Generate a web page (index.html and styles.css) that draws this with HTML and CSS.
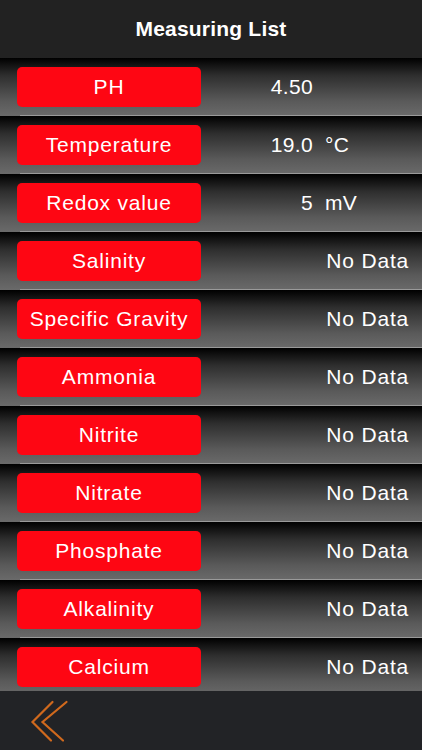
FILE: index.html
```html
<!DOCTYPE html>
<html lang="en">
  <head>
    <meta charset="UTF-8" />
    <meta name="viewport" content="width=device-width, initial-scale=1.0" />
    <title>Measuring List</title>
    <link rel="stylesheet" href="styles.css">
  </head>
  <body>
    <header class="nav-bar">
      <h1>Measuring List</h1>
    </header>

    <div class="list">
      <div class="row">
        <span class="name">PH</span>
        <span class="value">4.50</span>
      </div>
      <div class="row">
        <span class="name">Temperature</span>
        <span class="value">19.0</span>
        <span class="unit">&deg;C</span>
      </div>
      <div class="row">
        <span class="name">Redox value</span>
        <span class="value">5</span>
        <span class="unit">mV</span>
      </div>
      <div class="row">
        <span class="name">Salinity</span>
        <span class="no-data">No Data</span>
      </div>
      <div class="row">
        <span class="name">Specific Gravity</span>
        <span class="no-data">No Data</span>
      </div>
      <div class="row">
        <span class="name">Ammonia</span>
        <span class="no-data">No Data</span>
      </div>
      <div class="row">
        <span class="name">Nitrite</span>
        <span class="no-data">No Data</span>
      </div>
      <div class="row">
        <span class="name">Nitrate</span>
        <span class="no-data">No Data</span>
      </div>
      <div class="row">
        <span class="name">Phosphate</span>
        <span class="no-data">No Data</span>
      </div>
      <div class="row">
        <span class="name">Alkalinity</span>
        <span class="no-data">No Data</span>
      </div>
      <div class="row">
        <span class="name">Calcium</span>
        <span class="no-data">No Data</span>
      </div>
    </div>

    <footer class="tool-bar">
      <!-- back button -->
      <svg class="back" width="40" height="44" viewBox="0 0 40 44">
        <polyline points="22.5,3 2.5,23 21,41.5" />
        <polyline points="36.5,3 12.5,23 33,41.5" />
      </svg>
    </footer>
  </body>
</html>
```

FILE: styles.css
```css
body {
  font-family: "Liberation Sans", Arial, sans-serif;
  background-color: #222326;
  margin: 0;
  padding: 0;
  height: 750px;
  display: flex;
  flex-direction: column;
  overflow: hidden;
  color: #fff;
}
.nav-bar {
  height: 58px;
  flex: none;
  background-color: #222222;
  display: flex;
  align-items: center;
  justify-content: center;
}
.nav-bar h1 {
  margin: 0;
  font-size: 21px;
  font-weight: bold;
  letter-spacing: 0.2px;
  color: #fff;
}
.list {
  flex: 1;
  overflow: hidden;
}
.row {
  height: 58px;
  box-sizing: border-box;
  padding: 9px 13px 9px 17px;
  display: flex;
  align-items: center;
  font-size: 21px;
  letter-spacing: 0.35px;
  /* separator line is inset like an iOS table cell */
  background:
    linear-gradient(#9a9a9a, #9a9a9a) no-repeat 20px 100% / calc(100% - 20px) 1px,
    linear-gradient(#000 0%, #2e2e2e 30%, #5a5a5a 75%, #6a6a6a 100%);
}
.name {
  width: 184px;
  height: 40px;
  flex: none;
  background-color: #fe0613;
  border-radius: 5px;
  display: flex;
  align-items: center;
  justify-content: center;
  color: #fff;
  letter-spacing: 0.8px;
}
.value {
  width: 112px;
  text-align: right;
}
.unit {
  margin-left: 12px;
}
.no-data {
  margin-left: auto;
  letter-spacing: 0.8px;
}
.tool-bar {
  height: 59px;
  flex: none;
  background-color: #222326;
  padding: 8px 0 0 30px;
  box-sizing: border-box;
}
.back {
  display: block;
}
.back polyline {
  fill: none;
  stroke: #d0691d;
  stroke-width: 2.2;
  stroke-linecap: round;
  stroke-linejoin: miter;
}
```
